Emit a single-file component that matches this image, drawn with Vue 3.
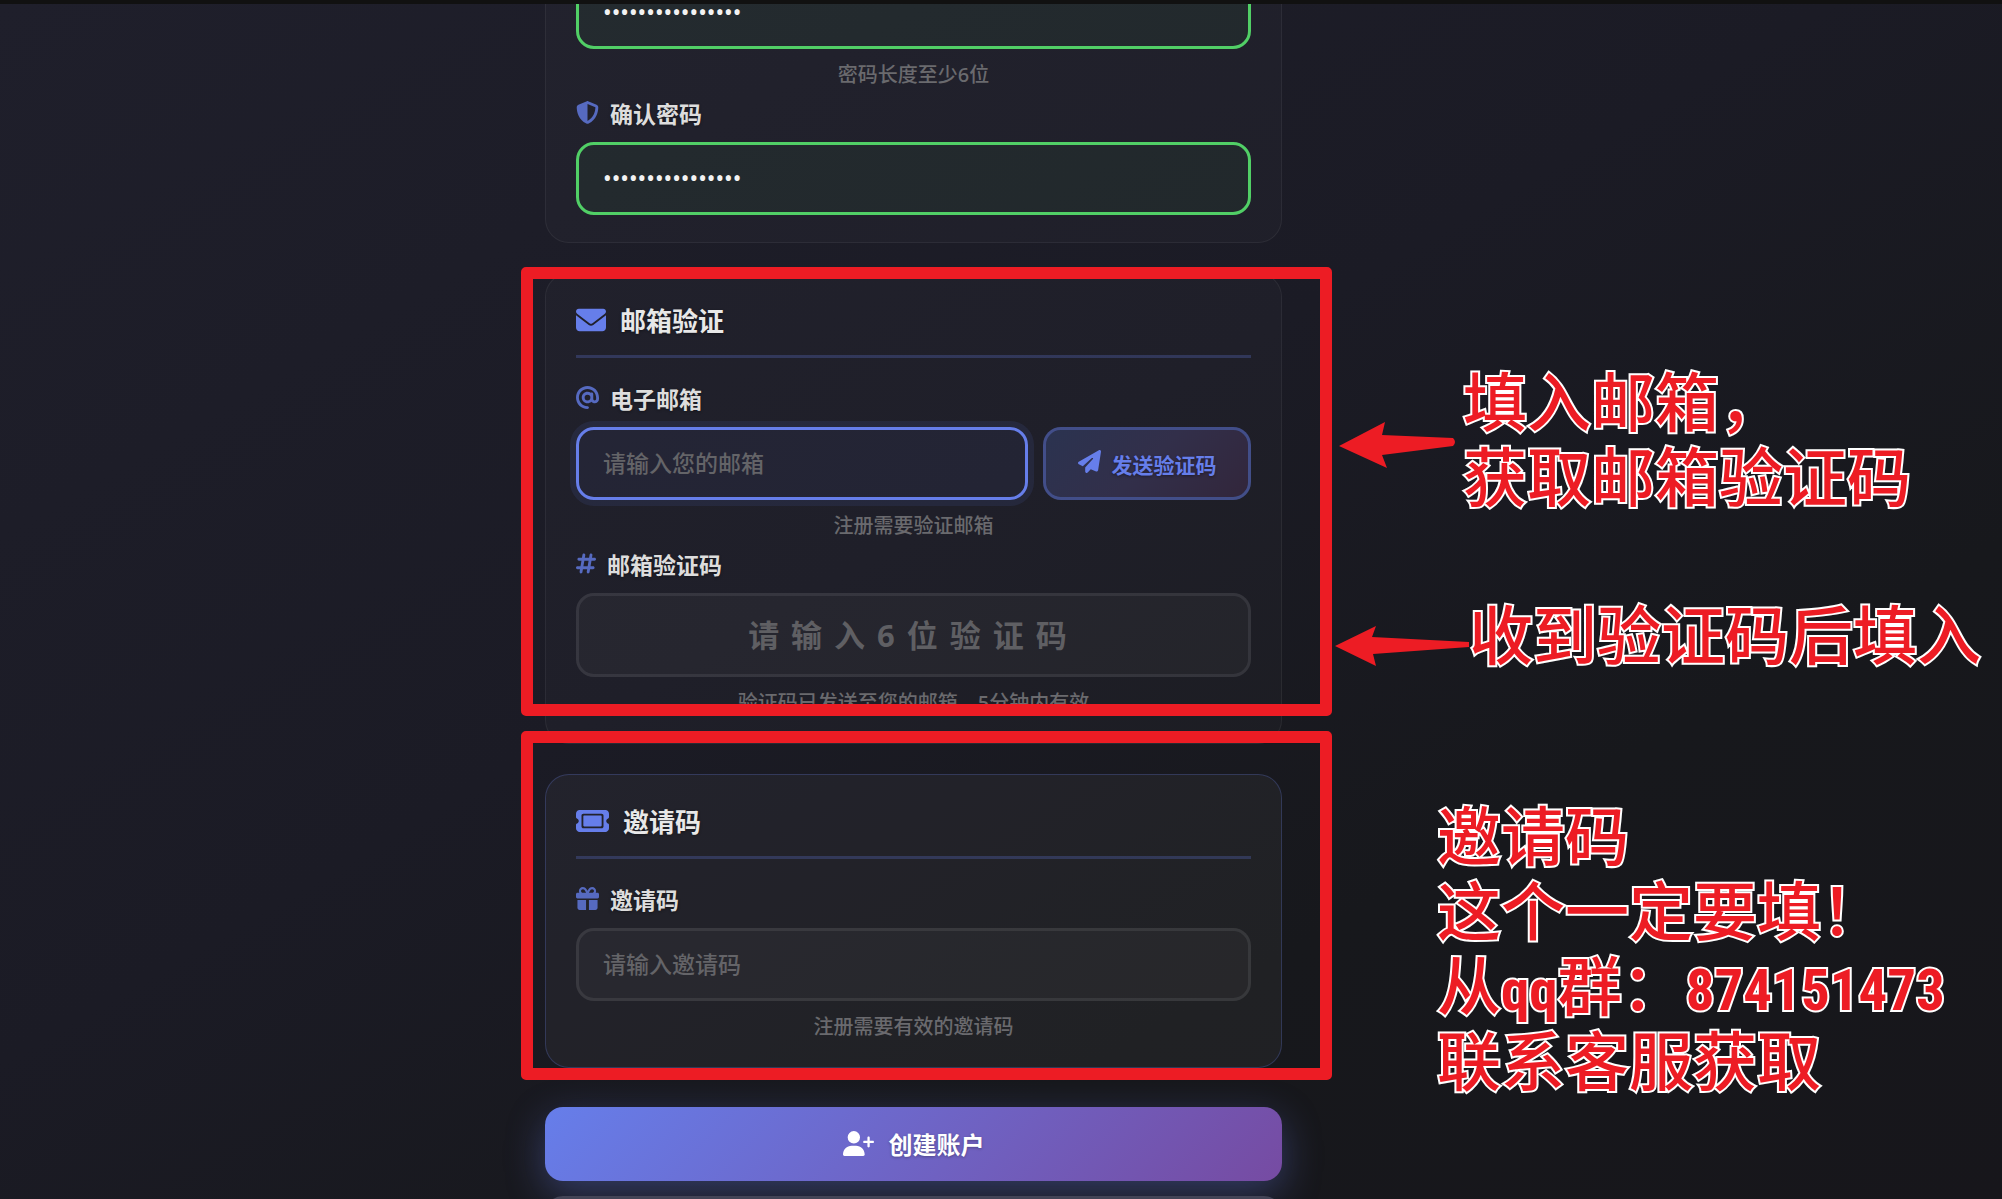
<script setup>
import { onMounted, reactive, ref } from 'vue'

const icons = {
  shield: {
    box: '0 0 512 512',
    d: 'M256 0c4.6 0 9.2 1 13.4 2.9L457.7 82.8c22 9.3 38.4 31 38.3 57.2c-.5 99.2-41.3 280.7-213.6 363.2c-16.7 8-36.1 8-52.8 0C57.3 420.7 16.5 239.2 16 140c-.1-26.2 16.3-47.9 38.3-57.2L242.7 2.9C246.8 1 251.4 0 256 0zm0 66.8l0 378.1C394 378 431.1 230.1 432 141.4L256 66.8s0 0 0 0z',
  },
  envelope: {
    box: '0 0 512 512',
    d: 'M48 64C21.5 64 0 85.5 0 112c0 15.1 7.1 29.3 19.2 38.4L236.8 313.6c11.4 8.5 27 8.5 38.4 0L492.8 150.4c12.1-9.1 19.2-23.3 19.2-38.4c0-26.5-21.5-48-48-48L48 64zM0 176L0 384c0 35.3 28.7 64 64 64l384 0c35.3 0 64-28.7 64-64l0-208L294.4 339.2c-22.8 17.1-54 17.1-76.8 0L0 176z',
  },
  at: {
    box: '0 0 512 512',
    d: 'M256 64C150 64 64 150 64 256s86 192 192 192c17.7 0 32 14.3 32 32s-14.3 32-32 32C114.6 512 0 397.4 0 256S114.6 0 256 0S512 114.6 512 256l0 32c0 53-43 96-96 96c-29.3 0-55.6-13.2-73.2-33.9C320 371.1 289.5 384 256 384c-70.7 0-128-57.3-128-128s57.3-128 128-128c27.9 0 53.7 8.9 74.7 24.1c5.7-5 13.1-8.1 21.3-8.1c17.7 0 32 14.3 32 32l0 80 0 32c0 17.7 14.3 32 32 32s32-14.3 32-32l0-32c0-106-86-192-192-192zm64 192a64 64 0 1 0 -128 0 64 64 0 1 0 128 0z',
  },
  plane: {
    box: '0 0 512 512',
    d: 'M498.1 5.6c10.1 7 15.4 19.1 13.5 31.2l-64 416c-1.5 9.7-7.4 18.2-16 23s-18.9 5.4-28 1.6L284 427.7l-68.5 74.1c-8.9 9.7-22.9 12.9-35.2 8.1S160 493.2 160 480l0-83.6c0-4 1.5-7.8 4.2-10.8L331.8 202.8c5.8-6.3 5.6-16-.4-22s-15.7-6.4-22-.7L106 360.8 17.7 316.6C7.1 311.3 .3 300.7 0 288.9s5.9-22.8 16.1-28.7l448-256c10.7-6.1 23.9-5.5 34 1.4z',
  },
  hashtag: {
    box: '0 0 448 512',
    d: 'M181.3 32.4c17.4 2.9 29.2 19.4 26.3 36.8L197.8 128l95.1 0 11.5-69.3c2.9-17.4 19.4-29.2 36.8-26.3s29.2 19.4 26.3 36.8L357.8 128l58.2 0c17.7 0 32 14.3 32 32s-14.3 32-32 32l-68.9 0L325.8 320l58.2 0c17.7 0 32 14.3 32 32s-14.3 32-32 32l-68.9 0-11.5 69.3c-2.9 17.4-19.4 29.2-36.8 26.3s-29.2-19.4-26.3-36.8l9.8-58.7-95.1 0-11.5 69.3c-2.9 17.4-19.4 29.2-36.8 26.3s-29.2-19.4-26.3-36.8L90.2 384 32 384c-17.7 0-32-14.3-32-32s14.3-32 32-32l68.9 0 21.3-128L64 192c-17.7 0-32-14.3-32-32s14.3-32 32-32l68.9 0 11.5-69.3c2.9-17.4 19.4-29.2 36.8-26.3zM187.1 192L165.8 320l95.1 0 21.3-128-95.1 0z',
  },
  ticket: {
    box: '0 0 576 512',
    d: 'M64 64C28.7 64 0 92.7 0 128l0 64c0 8.8 7.4 15.7 15.7 18.6C34.5 217.1 48 235 48 256s-13.5 38.9-32.3 45.4C7.4 304.3 0 311.2 0 320l0 64c0 35.3 28.7 64 64 64l448 0c35.3 0 64-28.7 64-64l0-64c0-8.8-7.4-15.7-15.7-18.6C541.5 294.9 528 277 528 256s13.5-38.9 32.3-45.4c8.3-2.9 15.7-9.8 15.7-18.6l0-64c0-35.3-28.7-64-64-64L64 64zm64 112l0 160c0 8.8 7.2 16 16 16l288 0c8.8 0 16-7.2 16-16l0-160c0-8.8-7.2-16-16-16l-288 0c-8.8 0-16 7.2-16 16zM96 160c0-17.7 14.3-32 32-32l320 0c17.7 0 32 14.3 32 32l0 192c0 17.7-14.3 32-32 32l-320 0c-17.7 0-32-14.3-32-32l0-192z',
  },
  gift: {
    box: '0 0 512 512',
    d: 'M190.5 68.8L225.3 128l-1.3 0-72 0c-22.1 0-40-17.9-40-40s17.9-40 40-40l2.2 0c14.9 0 28.8 7.9 36.3 20.8zM64 88c0 14.4 3.5 28 9.6 40L32 128c-17.7 0-32 14.3-32 32l0 64c0 17.7 14.3 32 32 32l448 0c17.7 0 32-14.3 32-32l0-64c0-17.7-14.3-32-32-32l-41.6 0c6.1-12 9.6-25.6 9.6-40c0-48.6-39.4-88-88-88l-2.2 0c-31.9 0-61.5 16.9-77.7 44.4L256 85.5l-24.1-41C215.7 16.9 186.1 0 154.2 0L152 0C103.4 0 64 39.4 64 88zm336 0c0 22.1-17.9 40-40 40l-72 0-1.3 0 34.8-59.2C329.1 55.9 342.9 48 357.8 48l2.2 0c22.1 0 40 17.9 40 40zM32 288l0 176c0 26.5 21.5 48 48 48l144 0 0-224L32 288zM288 512l144 0c26.5 0 48-21.5 48-48l0-176-192 0 0 224z',
  },
  userPlus: {
    box: '0 0 640 512',
    d: 'M96 128a128 128 0 1 1 256 0A128 128 0 1 1 96 128zM0 482.3C0 383.8 79.8 304 178.3 304l91.4 0C368.2 304 448 383.8 448 482.3c0 16.4-13.3 29.7-29.7 29.7L29.7 512C13.3 512 0 498.7 0 482.3zM504 312l0-64-64 0c-13.3 0-24-10.7-24-24s10.7-24 24-24l64 0 0-64c0-13.3 10.7-24 24-24s24 10.7 24 24l0 64 64 0c13.3 0 24 10.7 24 24s-10.7 24-24 24l-64 0 0 64c0 13.3-10.7 24-24 24s-24-10.7-24-24z',
  },
}

const form = reactive({
  password: 'abcdefgh12345678',
  confirm: 'abcdefgh12345678',
  email: '',
  code: '',
  invite: '',
})

const emailInput = ref(null)

onMounted(() => {
  emailInput.value.focus({ preventScroll: true })
})

function sendCode() {
  console.log('send code to', form.email)
}

function register() {
  console.log('register', form.email)
}
</script>

<template>
  <div class="page">
    <form class="register-form" @submit.prevent="register">
      <section class="card">
        <input
          v-model="form.password"
          class="field valid"
          type="password"
          aria-label="密码"
          autocomplete="new-password"
        />
        <p class="hint">密码长度至少6位</p>
        <label class="label" for="confirm">
          <svg class="icon" :viewBox="icons.shield.box"><path :d="icons.shield.d" /></svg>
          确认密码
        </label>
        <input
          id="confirm"
          v-model="form.confirm"
          class="field valid"
          type="password"
          autocomplete="new-password"
        />
      </section>

      <section class="card">
        <h2 class="title">
          <svg class="icon" :viewBox="icons.envelope.box"><path :d="icons.envelope.d" /></svg>
          邮箱验证
        </h2>
        <label class="label" for="email">
          <svg class="icon" :viewBox="icons.at.box"><path :d="icons.at.d" /></svg>
          电子邮箱
        </label>
        <div class="row">
          <input
            id="email"
            ref="emailInput"
            v-model="form.email"
            class="field"
            type="email"
            placeholder="请输入您的邮箱"
          />
          <button class="send-btn" type="button" @click="sendCode">
            <svg class="icon" :viewBox="icons.plane.box"><path :d="icons.plane.d" /></svg>
            发送验证码
          </button>
        </div>
        <p class="hint">注册需要验证邮箱</p>
        <label class="label" for="code">
          <svg class="icon narrow" :viewBox="icons.hashtag.box"><path :d="icons.hashtag.d" /></svg>
          邮箱验证码
        </label>
        <input
          id="code"
          v-model="form.code"
          class="field code"
          type="text"
          maxlength="6"
          placeholder="请输入6位验证码"
        />
        <p class="hint">验证码已发送至您的邮箱，5分钟内有效</p>
        <div class="frame frame-email"></div>
      </section>

      <section class="card highlight">
        <h2 class="title">
          <svg class="icon wide" :viewBox="icons.ticket.box"><path :d="icons.ticket.d" /></svg>
          邀请码
        </h2>
        <label class="label" for="invite">
          <svg class="icon" :viewBox="icons.gift.box"><path :d="icons.gift.d" /></svg>
          邀请码
        </label>
        <input
          id="invite"
          v-model="form.invite"
          class="field"
          type="text"
          placeholder="请输入邀请码"
        />
        <p class="hint">注册需要有效的邀请码</p>
        <div class="frame frame-invite"></div>
      </section>

      <div class="actions">
        <button class="submit-btn" type="submit">
          <svg class="icon" :viewBox="icons.userPlus.box"><path :d="icons.userPlus.d" /></svg>
          创建账户
        </button>
        <button class="back-btn" type="button" aria-label="返回登录"></button>
      </div>
    </form>

    <aside class="notes">
      <div class="note">
        <svg class="arrow" viewBox="0 0 118 46">
          <path d="M0 24L46 0L43 13L114 16Q118 20 114 24L43 33L48 46Z" />
        </svg>
        <p>填入邮箱，<br />获取邮箱验证码</p>
      </div>
      <div class="note note-code">
        <svg class="arrow arrow-long" viewBox="0 0 134 40">
          <path d="M0 20L41 0L37 11L134 16L134 21L38 28L41 40Z" />
        </svg>
        <p>收到验证码后填入</p>
      </div>
      <div class="note note-invite">
        <p>邀请码<br />这个一定要填！<br />从<span class="latin">qq</span>群：<span class="latin">874151473</span><br />联系客服获取</p>
      </div>
    </aside>
  </div>
</template>

<style>
body {
  margin: 0;
  background: #17181c;
}
</style>

<style scoped>
* {
  box-sizing: border-box;
}

.page {
  display: grid;
  grid-template-columns: minmax(0, 1fr) 737px 720px;
  height: 100vh;
  overflow: hidden;
  border-top: 4px solid #111111;
  background: linear-gradient(150deg, #1f1f2b 0%, #1b1b25 45%, #17181c 72%, #17161b 100%);
  color: #e8e8e8;
  font-family: 'Noto Sans', 'Noto Sans CJK SC', sans-serif;
}

/* the form is scrolled past its first fields */
.register-form {
  grid-column: 2;
  display: flex;
  flex-direction: column;
  gap: 30px;
  margin-top: -56px;
}

.card {
  position: relative;
  padding: 27px 30px;
  border: 1px solid rgba(255, 255, 255, 0.06);
  border-radius: 24px;
  background: rgba(255, 255, 255, 0.02);
}

.card.highlight {
  border-color: rgba(102, 126, 234, 0.25);
  background: rgba(255, 255, 255, 0.04);
}

.icon {
  flex: none;
  width: 23px;
  height: 23px;
  margin-bottom: 4px;
  fill: currentColor;
}

.title {
  display: flex;
  align-items: center;
  gap: 14px;
  margin: 0 0 15px;
  padding: 1px 0 14px;
  border-bottom: 3px solid rgba(102, 126, 234, 0.25);
  font-size: 26px;
  font-weight: 700;
  line-height: 39px;
  text-shadow: 0 1px 3px rgba(0, 0, 0, 0.4);
}

.title .icon {
  width: 30px;
  height: 30px;
  color: #667eea;
}

.title .icon.wide {
  width: 33px;
}

.label {
  display: flex;
  align-items: center;
  gap: 11px;
  padding: 9px 0 11px;
  color: #dddddd;
  font-size: 23px;
  font-weight: 700;
  line-height: 34px;
  text-shadow: 0 1px 3px rgba(0, 0, 0, 0.4);
}

.label .icon {
  color: #566ac0;
}

.label .icon.narrow {
  width: 20px;
}

.field {
  display: block;
  width: 100%;
  min-width: 0;
  height: 73px;
  padding: 0 24px 2px;
  border: 3px solid rgba(255, 255, 255, 0.08);
  border-radius: 18px;
  outline: none;
  background: rgba(255, 255, 255, 0.03);
  color: #f2f2f2;
  caret-color: transparent;
  font-family: inherit;
  font-size: 23px;
}

.field::placeholder {
  color: #646468;
  font-weight: 500;
  opacity: 1;
}

.field.valid {
  border-color: #51cf66;
  background: rgba(81, 207, 102, 0.05);
}

.field:focus {
  border-color: #667eea;
  background: rgba(102, 126, 234, 0.06);
  box-shadow: 0 0 0 6px rgba(102, 126, 234, 0.1);
}

.field.code {
  height: 84px;
  padding-bottom: 0;
  font-size: 31px;
  font-weight: 700;
  letter-spacing: 12px;
  text-align: center;
}

.field.code::placeholder {
  color: #5f5f63;
  font-weight: 700;
}

.row {
  display: flex;
  gap: 15px;
}

.row .field {
  flex: 1;
}

.send-btn {
  display: flex;
  align-items: center;
  justify-content: center;
  gap: 11px;
  width: 208px;
  border: 3px solid rgba(102, 126, 234, 0.5);
  border-radius: 18px;
  background: linear-gradient(135deg, #2b3350, #322f4a 50%, #32263b) padding-box;
  color: #667eea;
  font-family: inherit;
  font-size: 21px;
  font-weight: 600;
  text-shadow: 0 1px 3px rgba(0, 0, 0, 0.4);
}

.hint {
  margin: 0;
  padding-top: 12px;
  color: #6a6a6e;
  font-size: 20px;
  font-weight: 500;
  line-height: 27px;
  text-align: center;
}

.actions {
  display: flex;
  flex-direction: column;
  gap: 15px;
  padding-top: 9px;
}

.submit-btn {
  display: flex;
  align-items: center;
  justify-content: center;
  gap: 15px;
  height: 74px;
  padding: 0 0 2px;
  border: none;
  border-radius: 18px;
  background: linear-gradient(135deg, #667eea 0%, #764ba2 100%);
  box-shadow: 0 12px 38px rgba(102, 126, 234, 0.35);
  color: #ffffff;
  font-family: inherit;
  font-size: 24px;
  font-weight: 700;
  text-shadow: 0 1px 3px rgba(0, 0, 0, 0.3);
}

.submit-btn .icon {
  width: 31px;
  height: 25px;
  margin: 0;
}

.back-btn {
  height: 74px;
  border: 3px solid #434456;
  border-radius: 18px;
  background: #2b2c3a;
}

/* red marker frames drawn over the two cards */
.frame {
  position: absolute;
  right: -51px;
  left: -25px;
  border: 12px solid #ed1c24;
  border-radius: 5px;
  pointer-events: none;
}

.frame-email {
  top: -7px;
  bottom: 27px;
}

.frame-invite {
  top: -44px;
  bottom: -13px;
}

.notes {
  padding: 357px 0 0 57px;
}

.note {
  display: flex;
  align-items: center;
  gap: 6px;
  color: #ed1c24;
  font-family: 'Noto Sans CJK SC', sans-serif;
  font-size: 64px;
  font-weight: 500;
  line-height: 75px;
  white-space: nowrap;
}

.note p {
  margin: 0;
  paint-order: stroke fill;
  -webkit-text-stroke: 4px #ffffff;
}

.latin {
  font-family: 'Roboto Condensed', 'DejaVu Sans Condensed', Roboto, sans-serif;
  font-size: 57px;
  font-weight: 700;
  line-height: 57px;
}

.arrow {
  flex: none;
  width: 118px;
  height: 46px;
  margin-top: 18px;
  fill: #ed1c24;
}

.arrow-long {
  width: 134px;
  height: 40px;
  margin-top: 28px;
}

.note-code {
  gap: 0;
  margin: 83px 0 126px -4px;
}

.note-invite {
  padding-left: 98px;
}
</style>
